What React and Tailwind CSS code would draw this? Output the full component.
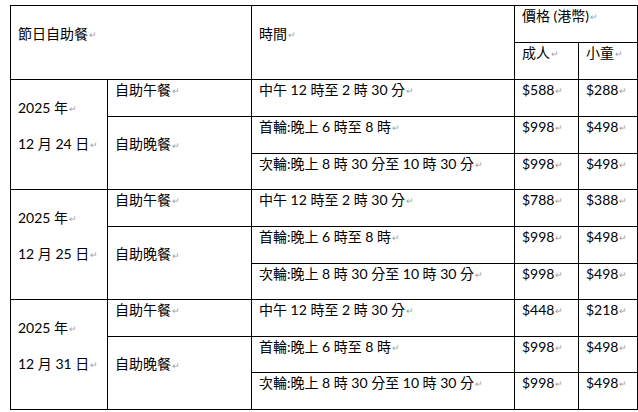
const groups = [
  { day: "24", lunch: ["$588", "$288"], first: ["$998", "$498"], second: ["$998", "$498"] },
  { day: "25", lunch: ["$788", "$388"], first: ["$998", "$498"], second: ["$998", "$498"] },
  { day: "31", lunch: ["$448", "$218"], first: ["$998", "$498"], second: ["$998", "$498"] },
];

const heights = [
  ["h-[37px]", "h-[37px]", "h-[36px]"],
  ["h-[37px]", "h-[37px]", "h-[36px]"],
  ["h-[37px]", "h-[36px]", "h-[37px]"],
];

// Word paragraph mark
function Mark() {
  return <span className="text-[9px] text-gray-400 ml-[1px] align-middle">↵</span>;
}

function Cell({ children, rowSpan, colSpan, middle }) {
  return (
    <td
      rowSpan={rowSpan}
      colSpan={colSpan}
      className={
        "border border-black pl-[7px] pr-1 " + (middle ? "align-middle pb-4" : "align-top pt-0")
      }
    >
      {children}
    </td>
  );
}

function Group({ g, h }) {
  return (
    <>
      <tr className={h[0]}>
        <Cell rowSpan={3} middle>
          <p className="mb-[15px]">
            2025 年<Mark />
          </p>
          <p>
            12 月 {g.day} 日<Mark />
          </p>
        </Cell>
        <Cell>
          自助午餐<Mark />
        </Cell>
        <Cell>
          中午 12 時至 2 時 30 分<Mark />
        </Cell>
        <Cell>
          {g.lunch[0]}
          <Mark />
        </Cell>
        <Cell>
          {g.lunch[1]}
          <Mark />
        </Cell>
      </tr>
      <tr className={h[1]}>
        <Cell rowSpan={2} middle>
          自助晚餐<Mark />
        </Cell>
        <Cell>
          首輪:晚上 6 時至 8 時<Mark />
        </Cell>
        <Cell>
          {g.first[0]}
          <Mark />
        </Cell>
        <Cell>
          {g.first[1]}
          <Mark />
        </Cell>
      </tr>
      <tr className={h[2]}>
        <Cell>
          次輪:晚上 8 時 30 分至 10 時 30 分<Mark />
        </Cell>
        <Cell>
          {g.second[0]}
          <Mark />
        </Cell>
        <Cell>
          {g.second[1]}
          <Mark />
        </Cell>
      </tr>
    </>
  );
}

export default function App() {
  return (
    <div className="w-[638px] h-[412px] bg-white overflow-hidden pt-[5px] pl-[10px] text-black text-[14px] leading-[20px] font-['Lato','Noto_Sans_CJK_TC',sans-serif]">
      <table className="table-fixed border-collapse w-[627px]">
        <colgroup>
          <col className="w-[97px]" />
          <col className="w-[144px]" />
          <col className="w-[263px]" />
          <col className="w-[64px]" />
          <col className="w-[59px]" />
        </colgroup>
        <tbody>
          <tr className="h-[37px]">
            <Cell colSpan={2} rowSpan={2} middle>
              節日自助餐<Mark />
            </Cell>
            <Cell rowSpan={2} middle>
              時間<Mark />
            </Cell>
            <Cell colSpan={2}>
              價格 (港幣)<Mark />
            </Cell>
          </tr>
          <tr className="h-[37px]">
            <Cell>
              成人<Mark />
            </Cell>
            <Cell>
              小童<Mark />
            </Cell>
          </tr>
          {groups.map((g, i) => (
            <Group key={i} g={g} h={heights[i]} />
          ))}
        </tbody>
      </table>
    </div>
  );
}
